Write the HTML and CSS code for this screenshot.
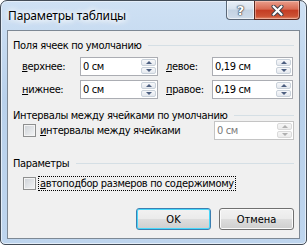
FILE: index.html
```html
<!DOCTYPE html>
<html>
<head>
    <meta charset='utf-8'>
    <title>Параметры таблицы</title>
    <link rel="stylesheet" href="styles.css">
</head>
<body>
    <div class="window">
        <header class="titlebar">
            <span class="title">Параметры таблицы</span>
            <div class="caps">
                <button class="cap cap-help" type="button">?</button>
                <button class="cap cap-close" type="button">
                    <svg width="13" height="11" viewBox="0 0 13 11">
                        <path d="M2.5 1.5 L10.5 9.5 M10.5 1.5 L2.5 9.5" stroke="#3a3f4a" stroke-width="4" stroke-linecap="round"/>
                        <path d="M2.5 1.5 L10.5 9.5 M10.5 1.5 L2.5 9.5" stroke="#fff" stroke-width="2.2" stroke-linecap="round"/>
                    </svg>
                </button>
            </div>
        </header>
        <div class="client">
            <section class="group">
                <div class="group-head"><span>Поля ячеек по умолчанию</span><i class="rule"></i></div>
                <div class="margins">
                    <label class="lbl"><u>в</u>ерхнее:</label>
                    <div class="spin"><span class="spin-value">0 см</span><span class="spin-btns"><b><i class="up"></i></b><b><i class="down"></i></b></span></div>
                    <label class="lbl lbl-r"><u>л</u>евое:</label>
                    <div class="spin"><span class="spin-value">0,19 см</span><span class="spin-btns"><b><i class="up"></i></b><b><i class="down"></i></b></span></div>
                    <label class="lbl"><u>н</u>ижнее:</label>
                    <div class="spin"><span class="spin-value">0 см</span><span class="spin-btns"><b><i class="up"></i></b><b><i class="down"></i></b></span></div>
                    <label class="lbl lbl-r"><u>п</u>равое:</label>
                    <div class="spin"><span class="spin-value">0,19 см</span><span class="spin-btns"><b><i class="up"></i></b><b><i class="down"></i></b></span></div>
                </div>
            </section>
            <section class="group group-2">
                <div class="group-head"><span>Интервалы между ячейками по умолчанию</span><i class="rule"></i></div>
                <div class="check-row">
                    <span class="check"></span>
                    <label class="check-label"><u>и</u>нтервалы между ячейками</label>
                    <div class="spin spin-off"><span class="spin-value">0 см</span><span class="spin-btns"><b><i class="up"></i></b><b><i class="down"></i></b></span></div>
                </div>
            </section>
            <section class="group group-3">
                <div class="group-head"><span>Параметры</span><i class="rule"></i></div>
                <div class="check-row">
                    <span class="check"></span>
                    <label class="check-label focus"><u>а</u>втоподбор размеров по содержимому</label>
                </div>
            </section>
            <div class="buttons">
                <button class="btn btn-default" type="button">OK</button>
                <button class="btn" type="button">Отмена</button>
            </div>
        </div>
    </div>
</body>
</html>
```

FILE: styles.css
```css
* {
    box-sizing: border-box;
}
html, body {
    margin: 0;
    padding: 0;
}
body {
    width: 307px;
    height: 246px;
    overflow: hidden;
    background: #fff;
    font-family: "DejaVu Sans Condensed", "DejaVu Sans", sans-serif;
    font-stretch: condensed;
    font-size: 11px;
    letter-spacing: -0.35px;
    color: #000;
}
u {
    text-decoration: underline;
    text-underline-offset: 1px;
}

/* window frame */
.window {
    width: 307px;
    height: 245px;
    border: 1px solid #434c57;
    border-radius: 7px 7px 5px 5px;
    background: linear-gradient(#cfe1f4, #b9d1eb 40%, #bed5ee);
    box-shadow: inset 0 0 0 1px #e4eef9;
    padding: 0 6px 5px 6px;
    display: flex;
    flex-direction: column;
}
.titlebar {
    height: 29px;
    display: flex;
    justify-content: space-between;
    align-items: flex-start;
}
.title {
    margin-top: 7px;
    padding-left: 1px;
    font-family: "Noto Sans", "Open Sans", sans-serif;
    font-stretch: normal;
    font-size: 12px;
    line-height: 16px;
    letter-spacing: -0.15px;
    text-shadow: 0 0 6px #fff, 0 0 6px #fff, 0 0 8px #fff;
}
.caps {
    display: flex;
    margin-left: auto;
}
.cap {
    height: 19px;
    margin: 0;
    padding: 0;
    border: 1px solid #5b6878;
    border-top: none;
    display: flex;
    align-items: center;
    justify-content: center;
}
.cap-help {
    width: 28px;
    border-radius: 0 0 0 4px;
    border-right: none;
    background: linear-gradient(#e8eff7, #d7e2ee 45%, #c3d2e2 50%, #cfdcea);
    box-shadow: inset 0 0 0 1px rgba(255,255,255,.6);
    font-family: "DejaVu Sans", sans-serif;
    font-stretch: normal;
    letter-spacing: 0;
    font-weight: bold;
    font-size: 13px;
    color: #fff;
    text-shadow: 0 0 1px #2c3540, 0 0 1px #2c3540, 0 0 2px #2c3540;
}
.cap-close {
    width: 46px;
    border-radius: 0 0 4px 0;
    border-color: #5a2a22;
    background: linear-gradient(#e99e8c, #d86a52 45%, #c43d24 52%, #cc5234 85%, #e48f70);
    box-shadow: inset 0 0 0 1px rgba(255,220,210,.45);
}

/* client area */
.client {
    flex: 1;
    border: 1px solid #7d8894;
    background: #f0f0f0;
    padding: 8px 5px 0 5px;
    display: flex;
    flex-direction: column;
}
.group-head {
    display: flex;
    align-items: center;
    height: 13px;
    line-height: 13px;
}
.group-head .rule {
    flex: 1;
    height: 1px;
    margin-left: 7px;
    background: #d5dfe5;
}
.group-2 {
    margin-top: 10px;
}
.group-3 {
    margin-top: 17px;
}

.margins {
    margin-top: 5px;
    padding-left: 9px;
    display: grid;
    grid-template-columns: 58px 78px 54px 81px;
    row-gap: 4px;
    align-items: center;
}
.lbl {
    line-height: 19px;
}
.lbl-r {
    padding-left: 8px;
}

/* spin box */
.spin {
    display: flex;
    height: 19px;
    border: 1px solid #abadb3;
    background: #fff;
    padding: 1px;
}
.spin-value {
    flex: 1;
    padding-left: 1px;
    line-height: 15px;
}
.spin-btns {
    width: 15px;
    display: flex;
    flex-direction: column;
    gap: 1px;
}
.spin-btns b {
    flex: 1;
    display: flex;
    align-items: center;
    justify-content: center;
    border: 1px solid #c9d1da;
    border-radius: 2px;
    background: linear-gradient(#f7f8fa, #e4e8ee);
}
.spin-btns i {
    width: 0;
    height: 0;
    border-left: 3px solid transparent;
    border-right: 3px solid transparent;
}
.spin-btns .up {
    border-bottom: 3px solid #4d5f80;
}
.spin-btns .down {
    border-top: 3px solid #4d5f80;
}
.spin-off {
    border-color: #c4c4c4;
    color: #7a7a7a;
}
.spin-off .spin-btns b {
    border-color: #dadada;
    background: linear-gradient(#f6f6f6, #ececec);
}
.spin-off .spin-btns .up {
    border-bottom-color: #b0b0b0;
}
.spin-off .spin-btns .down {
    border-top-color: #b0b0b0;
}

/* checkbox rows */
.check-row {
    display: flex;
    align-items: center;
    padding-left: 10px;
}
.group-2 .check-row {
    margin-top: -1px;
}
.group-2 .spin {
    margin-left: auto;
    width: 80px;
}
.group-3 .check-row {
    margin-top: 7px;
}
.check {
    width: 13px;
    height: 13px;
    flex: none;
    border: 1px solid #8e8f8f;
    background: linear-gradient(135deg, #cdd1d6, #f4f5f6);
    box-shadow: inset 0 0 0 1px #f4f4f4;
}
.check-label {
    margin-left: 4px;
    line-height: 13px;
}
.check-label.focus {
    margin-left: 3px;
    padding: 0 1px;
    outline: 1px dotted #000;
}

/* buttons */
.buttons {
    margin-top: 18px;
    display: flex;
    justify-content: flex-end;
    gap: 8px;
}
.btn {
    width: 75px;
    height: 22px;
    margin: 0;
    padding: 0;
    font: inherit;
    color: #000;
    border: 1px solid #707070;
    border-radius: 3px;
    background: linear-gradient(#f2f2f2, #ebebeb 48%, #dddddd 52%, #cfcfcf);
    box-shadow: inset 0 0 0 1px #fbfbfb;
}
.btn-default {
    border-color: #3c7fb1;
    box-shadow: inset 0 0 0 1px #48d8fb;
}
```
